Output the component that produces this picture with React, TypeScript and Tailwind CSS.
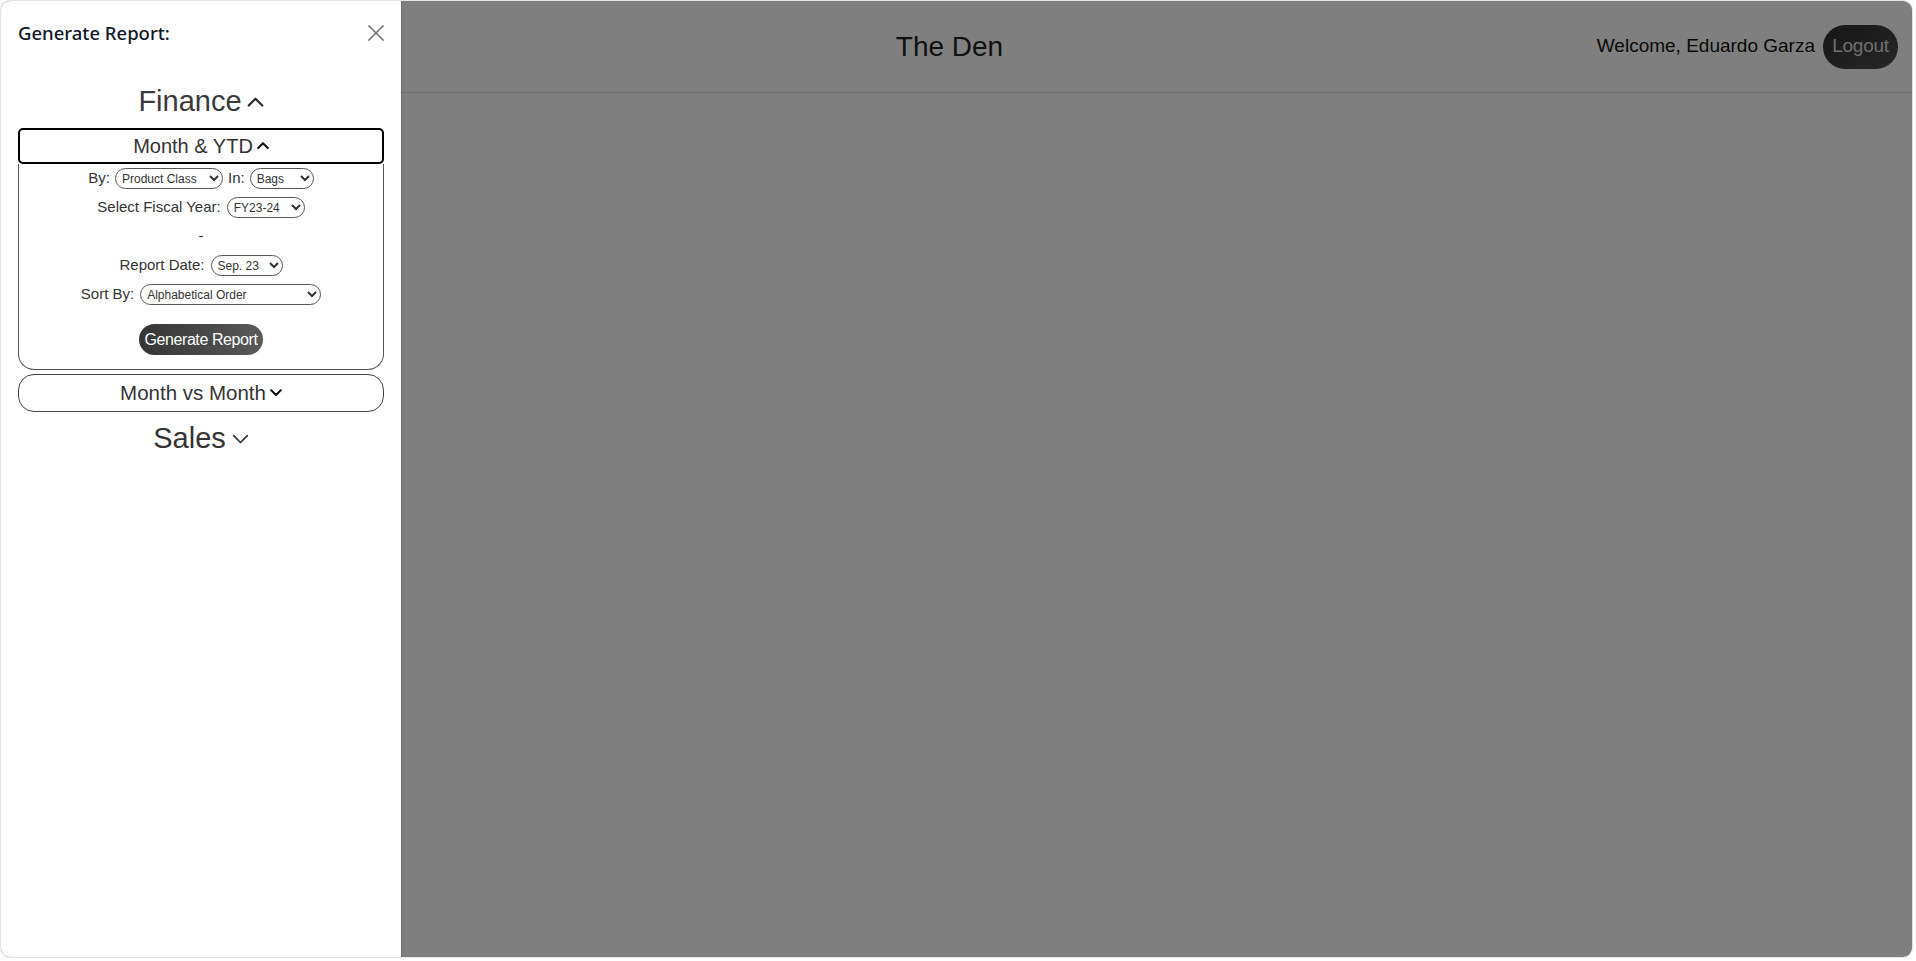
import React from "react";

const body = { fontFamily: '"Liberation Sans", Arial, sans-serif' };

function ChevronUp({ w = 16, sw = 2.5, color = "#222" }: { w?: number; sw?: number; color?: string }) {
  return (
    <svg width={w} height={w * 0.6} viewBox="0 0 20 12" fill="none">
      <polyline points="2,10 10,2 18,10" stroke={color} strokeWidth={sw} strokeLinecap="round" strokeLinejoin="round" />
    </svg>
  );
}
function ChevronDown({ w = 16, sw = 2.5, color = "#222" }: { w?: number; sw?: number; color?: string }) {
  return (
    <svg width={w} height={w * 0.6} viewBox="0 0 20 12" fill="none">
      <polyline points="2,2 10,10 18,2" stroke={color} strokeWidth={sw} strokeLinecap="round" strokeLinejoin="round" />
    </svg>
  );
}

function Sel({ w, children }: { w: string; children: React.ReactNode }) {
  return (
    <select
      className={`${w} h-[21px] rounded-full border border-[#555] bg-white pl-[2px] pr-[3px] text-[12px] leading-none text-[#333]`}
      style={body}
    >
      {children}
    </select>
  );
}

export default function App() {
  return (
    <div className="w-full h-[961px] bg-white" style={body}>
      <div className="relative w-[1913px] h-[958px] rounded-[10px] border border-[#e2e2e2] overflow-hidden bg-white">
        {/* underlying page */}
        <div className="grid grid-cols-[1fr_auto_1fr] items-center h-[92px] border-b border-[#dcdcdc] pr-[14px]">
          <div />
          <div className="text-[28px] text-[#222] leading-none">The Den</div>
          <div className="flex items-center justify-end gap-[8px]">
            <span className="text-[19px] text-[#111]">Welcome, Eduardo Garza</span>
            <button className="w-[75px] h-[44px] rounded-full bg-gradient-to-br from-[#2c2c2c] to-[#505050] text-[19px] text-[#dcdcdc] tracking-[-0.3px]">
              Logout
            </button>
          </div>
        </div>

        {/* overlay */}
        <div className="absolute inset-0 bg-black/50 flex">
          <aside className="w-[400px] h-full bg-white shadow-[1px_0_0_rgba(0,0,0,0.15)] px-[17px] pt-[17px] text-[#333]">
            <div className="flex items-center justify-between h-[30px]">
              <span
                className="text-[18.5px] font-medium text-[#111827]"
                style={{ fontFamily: '"Noto Sans", "Open Sans", sans-serif' }}
              >
                Generate Report:
              </span>
              <svg width="18" height="18" viewBox="0 0 18 18" className="mr-[-1px]">
                <line x1="1.5" y1="1.5" x2="16.5" y2="16.5" stroke="#6f6f6f" strokeWidth="1.6" />
                <line x1="16.5" y1="1.5" x2="1.5" y2="16.5" stroke="#6f6f6f" strokeWidth="1.6" />
              </svg>
            </div>

            <div className="mt-[38px] h-[32px] flex items-center justify-center gap-[5px] text-[29px] text-[#3a3a3a]">
              <span>Finance</span>
              <ChevronUp w={17} sw={2.6} color="#2a2a2a" />
            </div>

            <div className="mt-[10px]">
              <div className="h-[36px] rounded-[5px] border-2 border-black flex items-center justify-center gap-[4px] text-[20px] text-[#333]">
                <span>Month &amp; YTD</span>
                <ChevronUp w={12} sw={3.4} color="#111" />
              </div>
              <div className="border border-t-0 border-[#555] rounded-b-[16px] flex flex-col items-center text-[15px] text-[#333] pb-[14px]">
                <div className="h-[29px] flex items-center gap-[5px]">
                  <span>By:</span>
                  <Sel w="w-[108px]">
                    <option>Product Class</option>
                  </Sel>
                  <span>In:</span>
                  <Sel w="w-[64px]">
                    <option>Bags</option>
                  </Sel>
                </div>
                <div className="h-[29px] flex items-center gap-[6px]">
                  <span>Select Fiscal Year:</span>
                  <Sel w="w-[78px]">
                    <option>FY23-24</option>
                  </Sel>
                </div>
                <div className="h-[29px] flex items-center">-</div>
                <div className="h-[29px] flex items-center gap-[6px]">
                  <span>Report Date:</span>
                  <Sel w="w-[72px]">
                    <option>Sep. 23</option>
                  </Sel>
                </div>
                <div className="h-[29px] flex items-center gap-[6px]">
                  <span>Sort By:</span>
                  <Sel w="w-[181px]">
                    <option>Alphabetical Order</option>
                  </Sel>
                </div>
                <button className="mt-[15px] h-[31px] px-[5px] rounded-full bg-gradient-to-r from-[#353535] to-[#5a5a5a] text-white text-[16px] tracking-[-0.4px]">
                  Generate Report
                </button>
              </div>
            </div>

            <div className="mt-[4px] h-[38px] rounded-[16px] border border-[#444] flex items-center justify-center gap-[4px] text-[20.5px] text-[#333]">
              <span>Month vs Month</span>
              <ChevronDown w={12} sw={3.4} color="#111" />
            </div>

            <div className="mt-[11px] h-[32px] flex items-center justify-center gap-[6px] text-[29px] text-[#333]">
              <span>Sales</span>
              <ChevronDown w={17} sw={2} color="#333" />
            </div>
          </aside>
        </div>
      </div>
    </div>
  );
}
